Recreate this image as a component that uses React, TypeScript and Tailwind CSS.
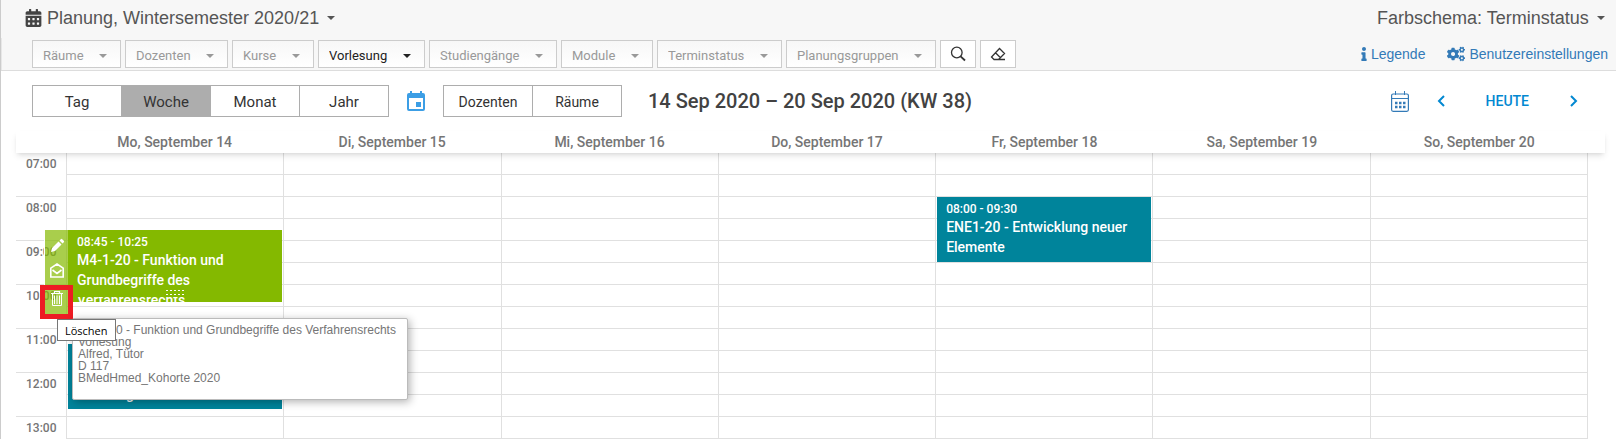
import React from 'react';
import { FaCalendarAlt, FaCogs, FaInfo } from 'react-icons/fa';

const FILTERS = [
  { label: 'Räume', active: false },
  { label: 'Dozenten', active: false },
  { label: 'Kurse', active: false },
  { label: 'Vorlesung', active: true },
  { label: 'Studiengänge', active: false },
  { label: 'Module', active: false },
  { label: 'Terminstatus', active: false },
  { label: 'Planungsgruppen', active: false },
];

const VIEWS = ['Tag', 'Woche', 'Monat', 'Jahr'];
const RESOURCES = ['Dozenten', 'Räume'];

const DAYS = [
  'Mo, September 14',
  'Di, September 15',
  'Mi, September 16',
  'Do, September 17',
  'Fr, September 18',
  'Sa, September 19',
  'So, September 20',
];

const HOURS = ['07:00', '08:00', '09:00', '10:00', '11:00', '12:00', '13:00'];
const FIRST_HOUR = 7;
const HOUR_HEIGHT = 44;

interface CalendarEvent {
  day: number;
  start: number;
  end: number;
  time: string;
  title: string;
  className: string;
}

const EVENTS: CalendarEvent[] = [
  { day: 0, start: 8.75, end: 10.39, time: '08:45 - 10:25', title: 'M4-1-20 - Funktion und Grundbegriffe des Verfahrensrechts', className: 'bg-[#84b900]' },
  { day: 0, start: 11.34, end: 12.82, time: '11:20 - 12:50', title: 'M4-1-20 - Einführung Grundlagen', className: 'bg-[#00849b]' },
  { day: 4, start: 8, end: 9.48, time: '08:00 - 09:30', title: 'ENE1-20 - Entwicklung neuer Elemente', className: 'bg-[#00849b]' },
];

const Caret = ({ className }: { className: string }) => (
  <svg viewBox="0 0 8 4" className={`pointer-events-none absolute h-1 w-2 fill-current ${className}`}>
    <path d="M0 0h8L4 4z" />
  </svg>
);

const FilterSelect = ({ label, active }: { label: string; active: boolean }) => (
  <label className={`relative flex h-7 items-center border border-[#ccc] bg-linear-to-b from-[#f7f7f7] to-white ${active ? 'text-[#222]' : 'text-[#999]'}`}>
    <select aria-label={label} className="h-full appearance-none pt-[3px] pr-9 pl-[10px] text-[13px] leading-5 outline-none">
      <option>{label}</option>
    </select>
    <Caret className="right-[13px] top-[13px]" />
  </label>
);

const ButtonGroup = ({ items, selected, className }: { items: string[]; selected?: string; className: string }) => (
  <div className={`flex h-8 divide-x divide-[#adadad] border border-[#adadad] ${className}`}>
    {items.map((item) => (
      <button
        key={item}
        type="button"
        className={`w-[89px] pt-0.5 text-[#333] last:w-[88px] ${item === selected ? 'bg-[#adadad]' : 'bg-white'}`}
      >
        {item}
      </button>
    ))}
  </div>
);

const EventActions = () => (
  <div className="absolute -left-6 top-0 z-10 flex h-[84px] w-[25px] flex-col items-center border-l border-white bg-[#84b900]/70 bg-clip-padding text-white">
    <button type="button" aria-label="Bearbeiten" className="mt-2 h-4 w-4">
      <svg viewBox="0 0 16 16" className="h-4 w-4">
        <path d="M2 14l1-4 6.500-6.500 3 3L6 13zM10.500 2.500l1.300-1.300a1 1 0 0 1 1.400 0l1.600 1.600a1 1 0 0 1 0 1.400l-1.300 1.300z" fill="currentColor" />
      </svg>
    </button>
    <button type="button" aria-label="Nachricht" className="mt-2 h-4 w-4">
      <svg viewBox="0 0 16 16" className="h-4 w-4" fill="none" stroke="currentColor" strokeWidth="1.600">
        <path d="M1.800 6.200L8 2l6.200 4.200V15H1.800zM3.500 8L8 11.500 12.500 8" />
      </svg>
    </button>
    <button type="button" aria-label="Löschen" className="mt-3 h-4 w-4">
      <svg viewBox="0 0 16 16" className="h-4 w-4" fill="none" stroke="currentColor">
        <path d="M2 3.500h12M5.500 3V1.500h5V3" strokeWidth="1.200" />
        <path d="M3.500 4v11.500h9V4M5.500 5.500V14M8 5.500V14M10.500 5.500V14" />
      </svg>
    </button>
    <div className="absolute -left-[5px] top-[55px] h-[34px] w-[33px] border-[5px] border-[#ed1c24]" />
  </div>
);

const EventCard = ({ event, editing }: { event: CalendarEvent; editing: boolean }) => (
  <div
    className="absolute inset-x-px"
    style={{ top: (event.start - FIRST_HOUR) * HOUR_HEIGHT, height: (event.end - event.start) * HOUR_HEIGHT }}
  >
    <div className={`h-full overflow-hidden py-1 pr-5 pl-[9px] text-white ${event.className}`}>
      <div className="text-xs leading-4 font-medium">{event.time}</div>
      <div className="text-sm leading-5 font-medium">{event.title}</div>
    </div>
    {editing && (
      <>
        <div className={`absolute bottom-[5px] left-2 right-0 h-2 ${event.className}`} />
        <svg viewBox="0 0 18 8" className="absolute bottom-1 left-[98px] h-2 w-[18px]">
          <path d="M0 .5h18M0 4.500h18" stroke="#fff" strokeDasharray="2 2" />
        </svg>
        <EventActions />
      </>
    )}
  </div>
);

const EventPopup = () => (
  <>
    <div className="absolute left-[5px] top-[165px] z-20 h-[82px] w-[336px] rounded-xs border border-[#bbb] bg-white p-[5px] font-['Liberation_Sans',Arial,sans-serif] text-xs leading-3 whitespace-nowrap text-[#757575] shadow-[2px_2px_8px_rgba(0,0,0,0.3)]">
      <div>M4-1-20 - Funktion und Grundbegriffe des Verfahrensrechts</div>
      <div>Vorlesung</div>
      <div>Alfred, Tütor</div>
      <div>D 117</div>
      <div>BMedHmed_Kohorte 2020</div>
    </div>
    <div role="tooltip" className="absolute -left-[10px] top-[166px] z-30 border border-[#767676] bg-white px-[7px] pt-0.5 font-['Open_Sans',sans-serif] text-[11px] leading-[18px] text-black">
      Löschen
    </div>
  </>
);

const Header = () => (
  <header className="border-b border-[#ddd] bg-[#f7f7f7] font-['Liberation_Sans',Arial,sans-serif]">
    <div className="flex h-[38px] items-center justify-between pr-[11px] pb-0.5 pl-6 text-lg text-[#555]">
      <label className="relative flex items-center gap-[5px]">
        <FaCalendarAlt className="h-[18px] w-[17px] text-[#444]" />
        <select aria-label="Planung" className="appearance-none pr-[15px] outline-none">
          <option>Planung, Wintersemester 2020/21</option>
        </select>
        <Caret className="right-0 top-3" />
      </label>
      <label className="relative flex items-center">
        <select aria-label="Farbschema" className="appearance-none pr-[15px] outline-none">
          <option>Farbschema: Terminstatus</option>
        </select>
        <Caret className="right-0 top-3" />
      </label>
    </div>
    <div className="flex h-8 items-start justify-between border-l border-[#e7e7e7] pt-0.5 pr-2 pl-[30px]">
      <div className="flex gap-1 font-[Roboto,sans-serif]">
        {FILTERS.map((f) => (
          <FilterSelect key={f.label} label={f.label} active={f.active} />
        ))}
        <button type="button" aria-label="Suchen" className="flex h-7 w-9 items-center justify-center border border-[#ccc] bg-white text-[#333]">
          <svg viewBox="0 0 16 16" className="h-4 w-4" fill="none" stroke="currentColor" strokeWidth="1.300">
            <circle cx="6.800" cy="6.500" r="5.300" />
            <path d="M10.600 10.300L15 14.500" strokeWidth="1.800" />
          </svg>
        </button>
        <button type="button" aria-label="Zurücksetzen" className="flex h-7 w-9 items-center justify-center border border-[#ccc] bg-white text-[#333]">
          <svg viewBox="0 0 16 16" className="h-4 w-4" fill="none" stroke="currentColor" strokeWidth="1.300">
            <path d="M4 13.500L1.500 11 9.500 2.500l5 5-6 6zM5.500 6.800l5 5M4 13.500h11" />
          </svg>
        </button>
      </div>
      <nav className="flex items-center gap-[22px] pt-1 text-sm leading-5 text-[#337ab7]">
        <a href="#legende" className="flex items-center gap-1">
          <FaInfo className="h-3.5 w-1.5" />
          Legende
        </a>
        <a href="#einstellungen" className="flex items-center gap-1">
          <FaCogs className="h-[18px] w-[18px]" />
          Benutzereinstellungen
        </a>
      </nav>
    </div>
  </header>
);

const Toolbar = () => (
  <div className="flex h-[60px] items-start justify-between pt-3.5 pr-[38px] pl-[31px]">
    <div className="flex items-center">
      <ButtonGroup items={VIEWS} selected="Woche" className="text-[15px]" />
      <button type="button" aria-label="Datum wählen" className="mx-[18px] h-5 w-[18px] text-[#3c9ee5]">
        <svg viewBox="0 0 18 20" className="h-5 w-[18px]">
          <path fill="currentColor" fillRule="evenodd" d="M3 0h2v2h8V0h2v2h1a2 2 0 0 1 2 2v14a2 2 0 0 1-2 2H2a2 2 0 0 1-2-2V4a2 2 0 0 1 2-2h1zM2 7v11h14V7zM9 11h5v5H9z" />
        </svg>
      </button>
      <ButtonGroup items={RESOURCES} className="text-sm" />
      <h1 className="pl-[26px] text-xl font-medium text-[#424242]">14 Sep 2020 – 20 Sep 2020 (KW 38)</h1>
    </div>
    <div className="flex h-8 items-center text-[#0288d1]">
      <button type="button" aria-label="Kalender" className="mr-7 h-[21px] w-[18px] text-[#337ab7]">
        <svg viewBox="0 0 18 21" className="h-[21px] w-[18px]" fill="none" stroke="currentColor">
          <rect x=".6" y="3" width="16.800" height="17.300" rx="1.500" strokeWidth="1.200" />
          <path d="M1 7.500h16M4.500 0v4M13.500 0v4" />
          <path d="M4 12h11M4 16h11" strokeWidth="2.500" strokeDasharray="2.500 1.500" />
        </svg>
      </button>
      <button type="button" aria-label="Zurück">
        <svg viewBox="0 0 8 12" className="h-3 w-2" fill="none" stroke="currentColor" strokeWidth="2">
          <path d="M7 1L2 6l5 5" />
        </svg>
      </button>
      <button type="button" className="mx-[41px] text-sm font-medium">HEUTE</button>
      <button type="button" aria-label="Weiter">
        <svg viewBox="0 0 8 12" className="h-3 w-2" fill="none" stroke="currentColor" strokeWidth="2">
          <path d="M1 1l5 5-5 5" />
        </svg>
      </button>
    </div>
  </div>
);

const WeekGrid = () => (
  <div className="mr-[11px] ml-[15px] text-[#757575]">
    <div className="relative z-10 flex h-[22px] bg-white pr-[17px] pl-[50px] shadow-md">
      {DAYS.map((day) => (
        <div key={day} className="flex-1 text-center text-sm leading-[22px] font-medium">{day}</div>
      ))}
    </div>
    <div className="flex pr-[17px]">
      <div className="w-[50px]">
        {HOURS.map((hour) => (
          <div key={hour} className="h-11 border-b border-[#e0e0e0] pt-[3px] pl-2.5 text-xs leading-4 font-medium last:h-[22px] last:border-b-0">
            {hour}
          </div>
        ))}
      </div>
      <div className="flex flex-1 border-r border-[#e0e0e0]">
        {DAYS.map((day, i) => (
          <div key={day} className="relative flex-1 border-l border-[#e0e0e0]">
            {Array.from({ length: 13 }, (_, row) => (
              <div key={row} className="h-[22px] border-b border-[#e0e0e0]" />
            ))}
            {EVENTS.filter((e) => e.day === i).map((e) => (
              <EventCard key={e.time} event={e} editing={e.time === '08:45 - 10:25'} />
            ))}
            {i === 0 && <EventPopup />}
          </div>
        ))}
      </div>
    </div>
  </div>
);

export default function App() {
  return (
    <main className="overflow-hidden border-l border-[#ccc] bg-white font-[Roboto,sans-serif]">
      <Header />
      <Toolbar />
      <WeekGrid />
    </main>
  );
}
